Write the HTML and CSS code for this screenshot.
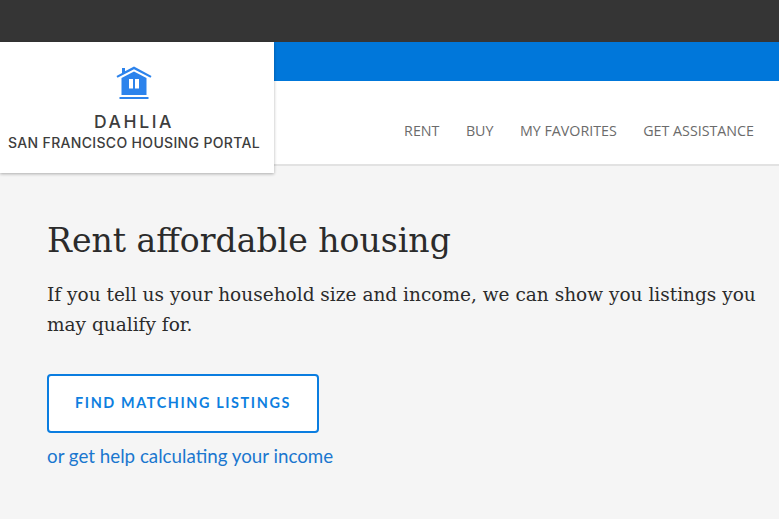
FILE: index.html
```html
<!DOCTYPE html>
<html lang="en">
<head>
<meta charset="utf-8">
<title>DAHLIA San Francisco Housing Portal</title>
<link rel="stylesheet" href="styles.css">
</head>
<body>
<div class="topbar"></div>
<header class="header">
  <div class="blue"></div>
  <nav class="nav">
    <a href="#">RENT</a>
    <a href="#">BUY</a>
    <a href="#">MY FAVORITES</a>
    <a href="#">GET ASSISTANCE</a>
  </nav>
  <a class="logo" href="#">
    <svg class="logo-icon" viewBox="0 0 36 34" width="36" height="34" aria-hidden="true">
      <path fill="#2c83ec" d="M6 2h3v3.2L18 .6 35.5 10 34.500 11.800 18 3.200 1.500 11.800.5 10 6 7z"/>
      <path fill="#2c83ec" d="M18 5.400 30.500 12v17H5.500V12z"/>
      <rect fill="#fff" x="13" y="13" width="4" height="9.500"/>
      <rect fill="#fff" x="19" y="13" width="4" height="9.500"/>
      <rect fill="#2c83ec" x="3.500" y="31" width="29" height="2"/>
    </svg>
    <span class="logo-name">DAHLIA</span>
    <span class="logo-sub">SAN FRANCISCO HOUSING PORTAL</span>
  </a>
</header>
<main class="main">
  <h1>Rent affordable housing</h1>
  <p>If you tell us your household size and income, we can show you listings you may qualify for.</p>
  <a class="button" href="#">FIND MATCHING LISTINGS</a>
  <a class="help" href="#">or get help calculating your income</a>
</main>
</body>
</html>
```

FILE: styles.css
```css
* { box-sizing: border-box; }
html, body { margin: 0; height: 100%; overflow: hidden; }
body { background: #f5f5f5; color: #2b2b2b; font-family: "Open Sans", sans-serif; }
a { text-decoration: none; }
.topbar { height: 42px; background: #353535; }
.header { position: relative; background: #fff; border-bottom: 2px solid #e2e2e2; }
.blue { height: 39px; background: #0077da; }
.nav { height: 83px; display: flex; justify-content: flex-end; align-items: center; gap: 26.5px; padding: 15px 25px 0 0; }
.nav a { color: #6b6b6b; font-size: 14.25px; }
.logo { position: absolute; left: 0; top: 0; width: 274px; height: 131px; background: #fff; box-shadow: 0 1px 3px rgba(0,0,0,.3); display: flex; flex-direction: column; align-items: center; padding: 24px 6px 0 0; color: #3d3d3d; font-family: Inter, sans-serif; font-weight: 500; }
.logo-icon { display: block; }
.logo-name { font-size: 17.5px; letter-spacing: 2.6px; line-height: 20px; margin-top: 12px; }
.logo-sub { font-size: 14px; letter-spacing: .33px; line-height: 18px; margin-top: 2px; white-space: nowrap; }
.main { padding: 53px 0 0 47px; }
h1 { margin: 0; font: 400 33.1px/44px "DejaVu Serif", serif; color: #2b2b2b; }
p { margin: 17px 0 0; width: 725px; font: 400 18.52px/30px "DejaVu Serif", serif; color: #2b2b2b; }
.button { display: flex; width: 272px; height: 59px; margin-top: 34px; padding-bottom: 2px; align-items: center; justify-content: center; background: #fff; border: 2px solid #0a7de0; border-radius: 4px; color: #0e7fe0; font: 700 14.4px Lato, sans-serif; letter-spacing: 1.6px; }
.help { display: block; margin-top: 10px; color: #1a77cf; font: 400 18.75px/26px Lato, sans-serif; }
```
